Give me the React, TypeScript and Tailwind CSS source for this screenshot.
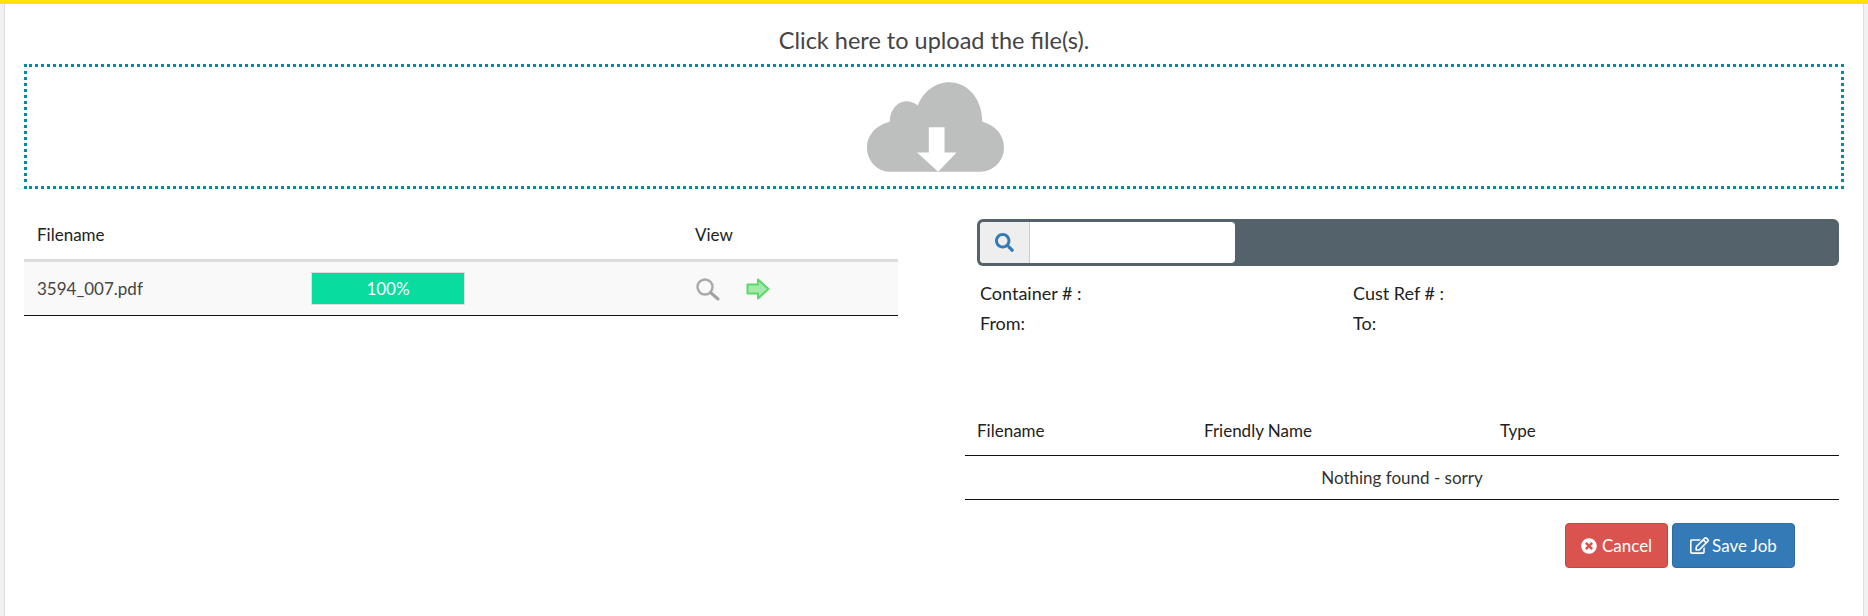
// src/App.tsx
import React from 'react';
import { FaRegEdit, FaSearch, FaTimesCircle } from 'react-icons/fa';

const CloudIcon = () => (
  <svg width="137" height="90" viewBox="0 0 410 268">
    <path
      fill="#bdbfbe"
      d="M72 268 C30 268 0 235 0 195 C0 158 28 128 68 118 C68 84 90 57 118 57 C132 57 143 62 152 70 C168 28 205 0 246 0 C302 0 345 50 345 118 C385 128 410 158 410 197 C410 235 378 268 340 268 Z"
    />
    <path fill="#ffffff" d="M185 135 H232 V210 H268 L213 268 L150 210 H185 Z" />
  </svg>
);

const GraySearch = () => (
  <svg width="25" height="24" viewBox="0 0 25 24" fill="none">
    <circle cx="10" cy="10" r="7.5" stroke="#a9a9a9" strokeWidth="2.4" />
    <path d="M15.5 15.5 L23 22" stroke="#a3a3a3" strokeWidth="3" strokeLinecap="round" />
  </svg>
);

const GreenArrow = () => (
  <svg width="24" height="22" viewBox="0 0 24 22">
    <path
      d="M1.5 6.5 H12 V1.5 L22.5 11 L12 20.5 V15.5 H1.5 Z"
      fill="#a5e8a9"
      stroke="#5ad968"
      strokeWidth="2"
      strokeLinejoin="round"
    />
  </svg>
);

const App: React.FC = () => {
  return (
    <div className="h-[616px] overflow-hidden bg-[#eff1f3] font-['Lato',sans-serif] text-[17px] text-[#333]">
      <div className="h-1 bg-[#ffe208]" />

      <div className="mx-1 h-[612px] border-x border-[#dddddd] bg-white px-[19px]">
        {/* Upload area */}
        <h2 className="pt-[21px] text-center text-[23.5px] leading-[30px] text-[#444]">
          Click here to upload the file(s).
        </h2>
        <div className="mt-[9px] flex h-[125px] items-start justify-center border-[3px] border-dotted border-[#068aa1] pl-[2px] pt-[15px]">
          <CloudIcon />
        </div>

        <div className="mt-[30px] flex">
          {/* Upload list */}
          <div className="w-[874px] shrink-0">
            <div className="flex h-[40px] items-start pl-[13px] pt-[4px] leading-[24px] text-[#222]">
              <div className="w-[658px]">Filename</div>
              <div>View</div>
            </div>
            <div className="flex h-[57px] items-center border-t-[3px] border-b border-t-[#dddddd] border-b-[#111] bg-[#f9f9f9] pl-[13px]">
              <div className="w-[274px] text-[#444]">3594_007.pdf</div>
              <div className="flex h-[33px] w-[154px] items-center justify-center border border-[#dddddd] bg-[#08dc9f] text-white">
                100%
              </div>
              <div className="ml-[230px] flex items-center gap-[26px]">
                <GraySearch />
                <GreenArrow />
              </div>
            </div>
          </div>

          {/* Job details */}
          <div className="ml-[67px] w-[874px] shrink-0">
            <div className="ml-[12px] flex h-[47px] w-[862px] items-center rounded-md bg-[#54626b] pl-[3px]">
              <div className="flex h-[41px] w-[255px] overflow-hidden rounded bg-white">
                <div className="flex w-[50px] items-center justify-center border-r border-[#cccccc] bg-[#eeeeee] text-[#337ab7]">
                  <FaSearch size={19} />
                </div>
              </div>
            </div>

            <div className="ml-[15px] mt-[15px] grid grid-cols-[373px_1fr] gap-y-[6px] text-[18px] leading-[24px] text-[#222]">
              <div>Container # :</div>
              <div>Cust Ref # :</div>
              <div>From:</div>
              <div>To:</div>
            </div>

            <div className="mt-[84px]">
              <div className="flex h-[37px] items-start border-b border-[#111] pl-[12px] leading-[24px] text-[#222]">
                <div className="w-[227px]">Filename</div>
                <div className="w-[296px]">Friendly Name</div>
                <div>Type</div>
              </div>
              <div className="flex h-[44px] items-center justify-center border-b border-[#111] text-[#333]">
                Nothing found - sorry
              </div>
            </div>

            <div className="mr-[44px] mt-[23px] flex justify-end gap-1">
              <button className="flex h-[45px] w-[103px] items-center justify-center gap-[5px] rounded border border-[#d43f3a] bg-[#d9534f] text-white">
                <FaTimesCircle size={16} />
                Cancel
              </button>
              <button className="flex h-[45px] w-[123px] items-center justify-center gap-[3px] rounded border border-[#2e6da4] bg-[#337ab7] text-white">
                <FaRegEdit size={19} />
                Save Job
              </button>
            </div>
          </div>
        </div>
      </div>
    </div>
  );
};

export default App;
